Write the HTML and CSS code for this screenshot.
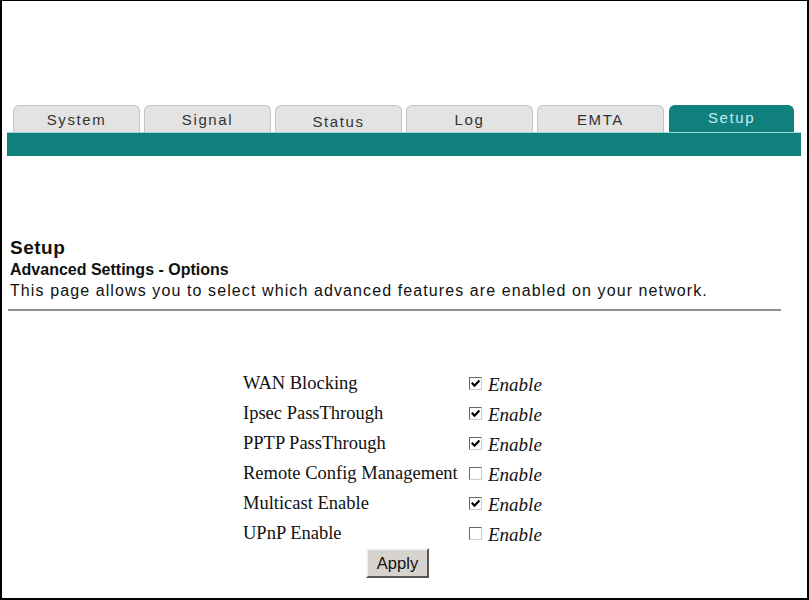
FILE: index.html
```html
<!DOCTYPE html>
<html>
<head>
<meta charset="utf-8">
<link rel="stylesheet" href="styles.css">
</head>
<body>
<div class="frame">
  <nav class="tabs">
    <div class="tab">System</div>
    <div class="tab">Signal</div>
    <div class="tab tab-low">Status</div>
    <div class="tab">Log</div>
    <div class="tab">EMTA</div>
    <div class="tab active">Setup</div>
  </nav>
  <div class="bar"></div>

  <section class="intro">
    <h1 class="title">Setup</h1>
    <h2 class="subtitle">Advanced Settings - Options</h2>
    <p class="desc">This page allows you to select which advanced features are enabled on your network.</p>
  </section>
  <hr class="rule">

  <form class="options">
    <div class="grid">
      <div class="label">WAN Blocking</div>
      <div class="opt"><span class="box"><svg viewBox="0 0 11 11" width="11" height="11"><path d="M1.8 4.8 L4.5 7.7 L9.4 2.4" fill="none" stroke="#000" stroke-width="2.2"/></svg></span><i>Enable</i></div>
      <div class="label">Ipsec PassThrough</div>
      <div class="opt"><span class="box"><svg viewBox="0 0 11 11" width="11" height="11"><path d="M1.8 4.8 L4.5 7.7 L9.4 2.4" fill="none" stroke="#000" stroke-width="2.2"/></svg></span><i>Enable</i></div>
      <div class="label">PPTP PassThrough</div>
      <div class="opt"><span class="box"><svg viewBox="0 0 11 11" width="11" height="11"><path d="M1.8 4.8 L4.5 7.7 L9.4 2.4" fill="none" stroke="#000" stroke-width="2.2"/></svg></span><i>Enable</i></div>
      <div class="label">Remote Config Management</div>
      <div class="opt"><span class="box"></span><i>Enable</i></div>
      <div class="label">Multicast Enable</div>
      <div class="opt"><span class="box"><svg viewBox="0 0 11 11" width="11" height="11"><path d="M1.8 4.8 L4.5 7.7 L9.4 2.4" fill="none" stroke="#000" stroke-width="2.2"/></svg></span><i>Enable</i></div>
      <div class="label">UPnP Enable</div>
      <div class="opt"><span class="box"></span><i>Enable</i></div>
    </div>
    <div class="actions"><button type="button" class="apply">Apply</button></div>
  </form>
</div>
</body>
</html>
```

FILE: styles.css
```css
html, body {
  margin: 0;
  padding: 0;
  background: #fff;
}
.frame {
  width: 809px;
  height: 600px;
  box-sizing: border-box;
  border-top: 1px solid #000;
  border-left: 2px solid #000;
  border-right: 2px solid #000;
  border-bottom: 2px solid #000;
  font-family: "Liberation Sans", Arial, sans-serif;
  color: #111;
  overflow: hidden;
}
.tabs {
  display: flex;
  gap: 4px;
  padding: 104px 0 0 11px;
  height: 27px;
}
.tab {
  width: 127px;
  height: 27px;
  box-sizing: border-box;
  background: #e3e3e3;
  border: 1px solid #c4c4c4;
  border-bottom: none;
  border-radius: 6px 6px 0 0;
  font-size: 15px;
  letter-spacing: 1.6px;
  color: #333;
  text-align: center;
  line-height: 28px;
}
.tab-low {
  line-height: 31px;
}
.tab.active {
  background: #10807f;
  border-color: #10807f;
  color: #c8ecec;
  line-height: 23px;
  width: 125px;
  margin-left: 1px;
}
.bar {
  height: 23px;
  margin: 0 6px 0 5px;
  background: #10807f;
  border-top: 1px solid #9fd6d6;
}
.intro {
  padding: 81px 0 0 8px;
}
.title {
  margin: 0;
  font-size: 19px;
  letter-spacing: 0.5px;
  font-weight: bold;
  line-height: 22px;
  color: #111;
}
.subtitle {
  margin: 0;
  font-size: 16px;
  font-weight: bold;
  line-height: 21px;
  color: #111;
}
.desc {
  margin: 0;
  font-size: 16px;
  letter-spacing: 1.1px;
  line-height: 21px;
  color: #111;
}
.rule {
  margin: 8px 0 0 6px;
  width: 773px;
  border: none;
  border-top: 2px solid #8f8f8f;
  height: 0;
}
.options {
  padding: 59px 0 0 241px;
}
.grid {
  display: grid;
  grid-template-columns: 226px auto;
  grid-auto-rows: 30px;
  font-family: "Liberation Serif", "Times New Roman", serif;
  font-size: 18.5px;
  color: #111;
}
.opt {
  display: flex;
  align-items: center;
  height: 26px;
}
.label {
  height: 26px;
  line-height: 26px;
}
.box {
  width: 13px;
  height: 13px;
  box-sizing: border-box;
  border: 1px solid #666;
  border-right-color: #ccc;
  border-bottom-color: #ccc;
  background: #fff;
  margin-right: 6px;
  display: inline-flex;
  align-items: center;
  justify-content: center;
}
.box svg {
  display: block;
  flex: none;
}
.opt i {
  font-size: 19px;
  line-height: 26px;
  position: relative;
  top: 2px;
}
.actions {
  display: flex;
  padding-left: 123px;
  margin-top: -2px;
}
.apply {
  font-family: "Liberation Sans", Arial, sans-serif;
  font-size: 16.5px;
  color: #111;
  background: #d6d3ce;
  border: 2px solid;
  border-color: #f4f4f4 #555 #555 #f4f4f4;
  width: 63px;
  height: 30px;
  padding: 0;
}
```
